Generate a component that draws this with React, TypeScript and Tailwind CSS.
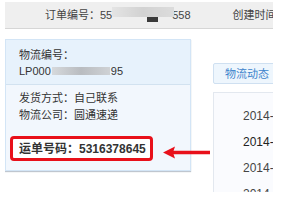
import React from "react";

const font = { fontFamily: '"Liberation Sans", "Noto Sans CJK SC", sans-serif' };

export default function App() {
  return (
    <div
      className="relative w-[303px] h-[215px] bg-white overflow-hidden text-[#333]"
      style={font}
    >
      <div className="ml-[5px] w-[268px] h-[215px] overflow-hidden pt-[2px]">
        {/* top bar */}
        <div className="h-[27px] bg-[#efefef] border-b border-[#d6d6d6] flex items-center pl-[40px] text-[11px] leading-[14px] text-[#444] whitespace-nowrap">
          <span>订单编号：55</span>
          <span className="relative self-start mt-[5px] w-[62px] h-[15px] mr-[-2px] z-10 shrink-0">
            <span className="absolute left-0 top-0 w-[62px] h-[10px] bg-gradient-to-r from-[#e4e4e4] via-[#d2d2d2] to-[#dcdcdc] blur-[0.5px]" />
            <span className="absolute left-[35px] top-[10px] w-[11px] h-[5px] bg-[#3a3a3a]" />
          </span>
          <span>558</span>
          <span className="ml-[42px]">创建时间</span>
        </div>

        <div className="mt-[10px] flex">
          {/* left panel */}
          <div className="w-[186px] shrink-0 h-[132px] border border-[#d3e5f6] bg-[#f2f7fd] shadow-[0_1px_1px_#bfc6cf] flex flex-col">
            <div className="h-[45px] bg-[#e7f2fc] border-b border-[#d2e2f0] pl-[13px] pt-[7px] text-[11px] leading-[16px]">
              <div>物流编号：</div>
              <div className="flex items-center">
                <span>LP000</span>
                <span className="w-[58px] h-[8px] ml-[1px] mr-[1px] bg-gradient-to-r from-[#d6d9dc] via-[#b9bcc0] to-[#cfd2d5] blur-[0.5px]" />
                <span>95</span>
              </div>
            </div>
            <div className="pl-[13px] pt-[5px] text-[11px] leading-[17px]">
              <div>发货方式：自己联系</div>
              <div>物流公司：圆通速递</div>
            </div>
            <div className="ml-[4px] mt-[12px] w-[143px] h-[25px] border-[3px] border-[#e8101a] rounded-[4px] bg-white flex items-center pl-[6px] text-[12px] font-bold leading-[14px] text-[#333] whitespace-nowrap">
              运单号码：5316378645
            </div>
          </div>

          {/* right area */}
          <div className="flex-1 min-w-0 pl-[22px] pt-[24px]">
            <div className="w-[70px] h-[21px] border border-[#cfe0f1] bg-[#eef6fd] rounded-[2px] flex items-center pl-[11px] text-[11px] leading-[14px] text-[#3d84cc] whitespace-nowrap">
              物流动态
            </div>
            <div className="mt-[8px] w-[70px] h-[100px] border-l border-t border-[#e3e8ef] bg-[#fafbfe] pl-[29px] pt-[16px] text-[12px] leading-[14px] text-[#444] overflow-hidden whitespace-nowrap">
              <div className="h-[26px]">2014-</div>
              <div className="h-[26px] text-[#222]">2014-</div>
              <div className="h-[26px]">2014-</div>
              <div className="h-[26px]">2014-</div>
            </div>
          </div>
        </div>
      </div>

      {/* red arrow */}
      <svg
        className="absolute left-[161px] top-[145px]"
        width="52"
        height="15"
        viewBox="0 0 52 15"
      >
        <line x1="10" y1="7.5" x2="49" y2="7.5" stroke="#e8101a" strokeWidth="3.5" />
        <polygon points="2,7.5 14,1.5 12,7.5 14,13.5" fill="#e8101a" />
      </svg>
    </div>
  );
}
